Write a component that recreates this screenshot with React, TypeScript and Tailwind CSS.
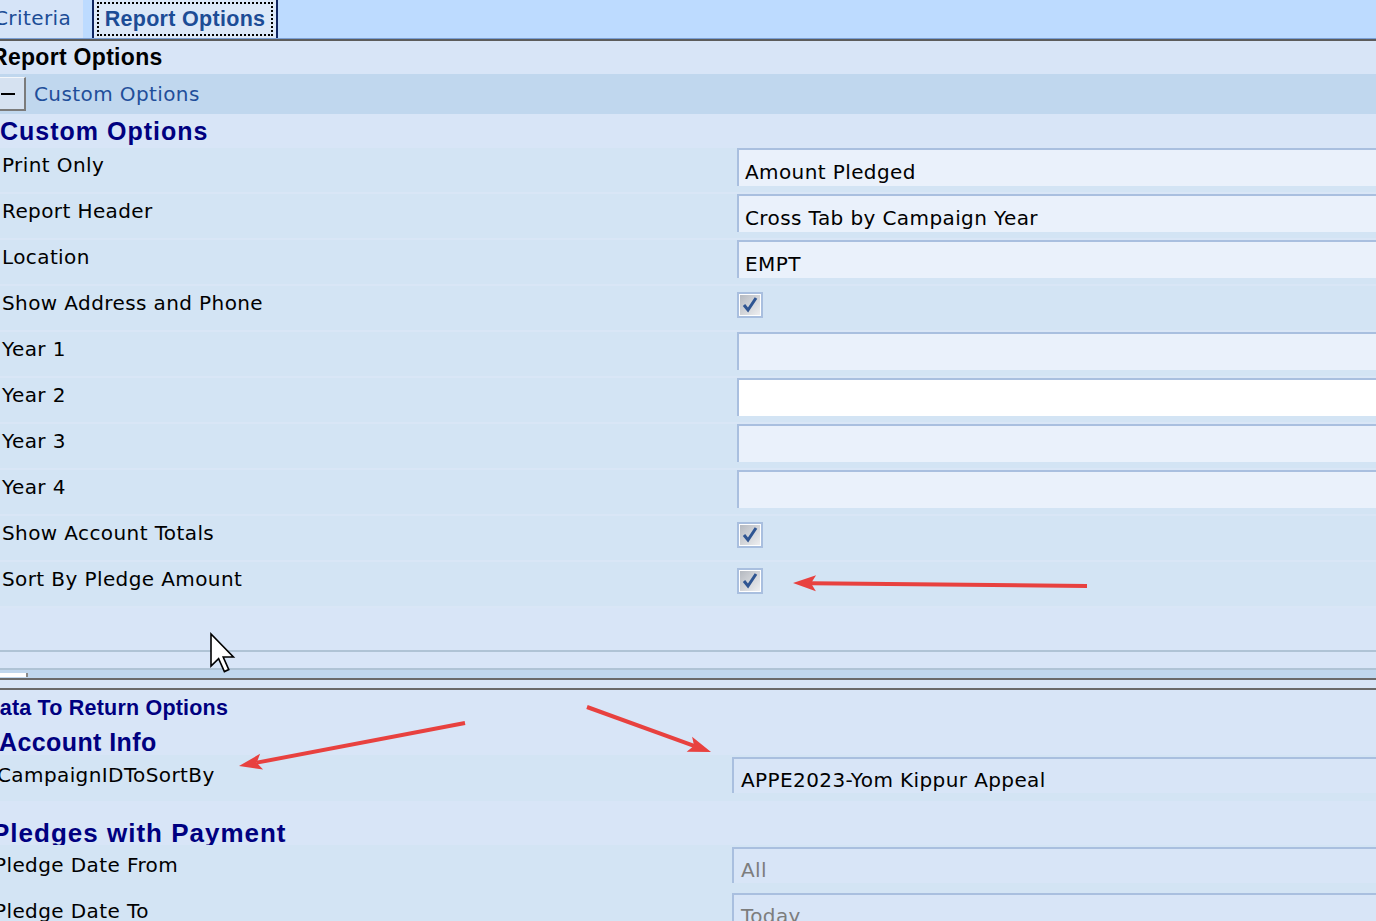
import type { ReactNode } from 'react';

const REG = "font-['DejaVu_Sans',sans-serif] tracking-[0.4px]";
const BOLD = "font-['Liberation_Sans',Arial,sans-serif] font-bold";

type Pt = [number, number];

// red annotation arrow: shaft from tail to tip, barbed head at tip
const Arrow = ({ tail, tip }: { tail: Pt; tip: Pt }) => {
  const dx = tail[0] - tip[0];
  const dy = tail[1] - tip[1];
  const len = Math.hypot(dx, dy);
  const ux = dx / len;
  const uy = dy / len;
  const px = -uy;
  const py = ux;
  const head = 23;
  const half = 8;
  const bx = tip[0] + ux * head;
  const by = tip[1] + uy * head;
  const nx = tip[0] + ux * (head - 5);
  const ny = tip[1] + uy * (head - 5);
  const pts = [
    tip,
    [bx + px * half, by + py * half],
    [nx, ny],
    [bx - px * half, by - py * half],
  ]
    .map(p => `${p[0]},${p[1]}`)
    .join(' ');
  return (
    <g>
      <line x1={tail[0]} y1={tail[1]} x2={nx} y2={ny} stroke="#e8413f" strokeWidth={4} />
      <polygon points={pts} fill="#e8413f" />
    </g>
  );
};

const Check = () => (
  <div className="w-[26px] h-[26px] border-2 border-[#a9bfdf] bg-white p-px">
    <div className="w-full h-full bg-gradient-to-br from-[#b5b9c0] to-[#eeeff1] relative">
      <svg viewBox="0 0 20 20" className="absolute inset-0 w-full h-full">
        <path d="M4 10 L8 15 L16 3" fill="none" stroke="#2f5592" strokeWidth={3} strokeLinejoin="miter" />
      </svg>
    </div>
  </div>
);

const TextBox = ({ value, white }: { value?: string; white?: boolean }) => (
  <div
    className={`h-[38px] border-t-2 border-l-2 border-[#a9bfdf] pl-[6px] pt-[10px] text-[20px] leading-[24px] whitespace-nowrap text-black ${
      white ? 'bg-white' : 'bg-[#eaf1fb]'
    }`}
  >
    {value}
  </div>
);

const Row = ({ label, children }: { label: string; children: ReactNode }) => (
  <div className="flex h-[46px] bg-[#d3e4f4] border-b-2 border-[#d9e6f6]">
    <div className="w-[737px] shrink-0 pl-[2px] pt-[5px] text-[20px] leading-[24px] whitespace-nowrap">{label}</div>
    <div className="flex-1">{children}</div>
  </div>
);

const BottomRow = ({ label, value, gray, clip }: { label: string; value: string; gray?: boolean; clip: string }) => (
  <div className="flex h-[46px] bg-[#d3e4f4]">
    <div className="w-[732px] shrink-0 overflow-hidden pt-[8px] text-[20px] leading-[24px] whitespace-nowrap">
      <div className={clip}>{label}</div>
    </div>
    <div className="flex-1 pt-[2px]">
      <div
        className={`h-[36px] border-t-2 border-l-2 border-[#a9bfdf] bg-[#d8e5f7] pl-[7px] pt-[9px] text-[20px] leading-[24px] whitespace-nowrap ${
          gray ? 'text-[#7d7d7d]' : 'text-black'
        }`}
      >
        {value}
      </div>
    </div>
  </div>
);

export default function App() {
  return (
    <div className={`relative w-[1376px] h-[921px] overflow-hidden bg-[#d8e5f7] text-black ${REG}`}>
      {/* tab strip */}
      <div className="flex h-[38px] bg-[#bddbff]">
        <div className="w-[83px] shrink-0 overflow-hidden bg-[#d6e4f8] pt-[6px] text-[20px] leading-[24px] text-[#1c4c96]">
          <div className="-ml-[6px]">Criteria</div>
        </div>
        <div className="w-[9px] shrink-0" />
        <div className="w-[186px] shrink-0 border-x-2 border-[#0d2462] bg-[#dce8f8] px-[3px] pt-[2px]">
          <div className="h-[34px] border-2 border-dotted border-black flex items-center justify-center">
            <span className={`${BOLD} text-[21.5px] leading-[24px] tracking-[0.3px] text-[#1c4c96]`}>Report Options</span>
          </div>
        </div>
      </div>
      <div className="h-px bg-[#7b9fd4]" />
      <div className="h-[2px] bg-[#5c5c5c]" />

      {/* report options header */}
      <div className="h-[33px] overflow-hidden pt-[2px]">
        <div className={`${BOLD} -ml-[9px] text-[23px] leading-[28px] tracking-[0.3px] text-black`}>Report Options</div>
      </div>

      {/* collapsible band */}
      <div className="flex h-[40px] items-center bg-[#c0d7ee]">
        <div className="w-[26px] h-[34px] shrink-0 border-t border-t-[#f4f7fb] border-r-2 border-b-2 border-[#7b7b7b] bg-[#d6e2f1] flex items-center">
          <div className="ml-[1px] w-[14px] h-[2px] bg-black" />
        </div>
        <div className="ml-[8px] text-[20px] leading-[24px] text-[#1f4e9a]">Custom Options</div>
      </div>

      {/* custom options title */}
      <div className={`${BOLD} h-[34px] pt-[3px] text-[25px] leading-[28px] tracking-[1px] text-[#000080]`}>Custom Options</div>

      <Row label="Print Only">
        <TextBox value="Amount Pledged" />
      </Row>
      <Row label="Report Header">
        <TextBox value="Cross Tab by Campaign Year" />
      </Row>
      <Row label="Location">
        <TextBox value="EMPT" />
      </Row>
      <Row label="Show Address and Phone">
        <div className="pt-[6px]">
          <Check />
        </div>
      </Row>
      <Row label="Year 1">
        <TextBox />
      </Row>
      <Row label="Year 2">
        <TextBox white />
      </Row>
      <Row label="Year 3">
        <TextBox />
      </Row>
      <Row label="Year 4">
        <TextBox />
      </Row>
      <Row label="Show Account Totals">
        <div className="pt-[6px]">
          <Check />
        </div>
      </Row>
      <Row label="Sort By Pledge Amount">
        <div className="pt-[6px]">
          <Check />
        </div>
      </Row>

      {/* splitter */}
      <div className="h-[42px]" />
      <div className="h-[2px] bg-[#afc3d5]" />
      <div className="h-[16px]" />
      <div className="h-[2px] bg-[#afc3d5]" />
      <div className="h-[8px] bg-[#c0d7ee] pt-[3px]">
        <div className="w-[28px] h-[4px] bg-white border-r-2 border-[#8a8a8a]" />
      </div>
      <div className="h-[2px] bg-[#6a6a6a]" />
      <div className="h-[8px]" />
      <div className="h-[2px] bg-[#6a6a6a]" />

      {/* data to return options */}
      <div className="mt-[6px] h-[24px] overflow-hidden">
        <div className={`${BOLD} -ml-[16px] text-[21.5px] leading-[24px] tracking-[0.2px] text-[#000080]`}>Data To Return Options</div>
      </div>
      <div className="mt-[10px] h-[25px] overflow-hidden">
        <div className={`${BOLD} -ml-[1px] text-[25px] leading-[25px] tracking-[0.4px] text-[#000080]`}>Account Info</div>
      </div>
      <BottomRow label="CampaignIDToSortBy" value="APPE2023-Yom Kippur Appeal" clip="-ml-[3px]" />
      <div className="mt-[19px] h-[25px] overflow-hidden">
        <div className={`${BOLD} -ml-[8px] text-[26px] leading-[26px] tracking-[1px] text-[#000080]`}>Pledges with Payment</div>
      </div>
      <BottomRow label="Pledge Date From" value="All" gray clip="-ml-[6px]" />
      <BottomRow label="Pledge Date To" value="Today" gray clip="-ml-[6px]" />

      {/* annotations and pointer drawn over the form */}
      <svg className="absolute inset-0 pointer-events-none" width={1376} height={921}>
        <Arrow tail={[1087, 586]} tip={[793, 583]} />
        <Arrow tail={[465, 723]} tip={[239, 766]} />
        <Arrow tail={[587, 707]} tip={[711, 752]} />
        <g transform="translate(210 633) scale(2)">
          <path
            d="M0.5 0.5 L0.5 16.5 L4.3 12.8 L7.2 19.3 L9.4 18.3 L6.6 12 L11.7 12 Z"
            fill="white"
            stroke="black"
            strokeWidth={0.8}
            strokeLinejoin="miter"
          />
        </g>
      </svg>
    </div>
  );
}
